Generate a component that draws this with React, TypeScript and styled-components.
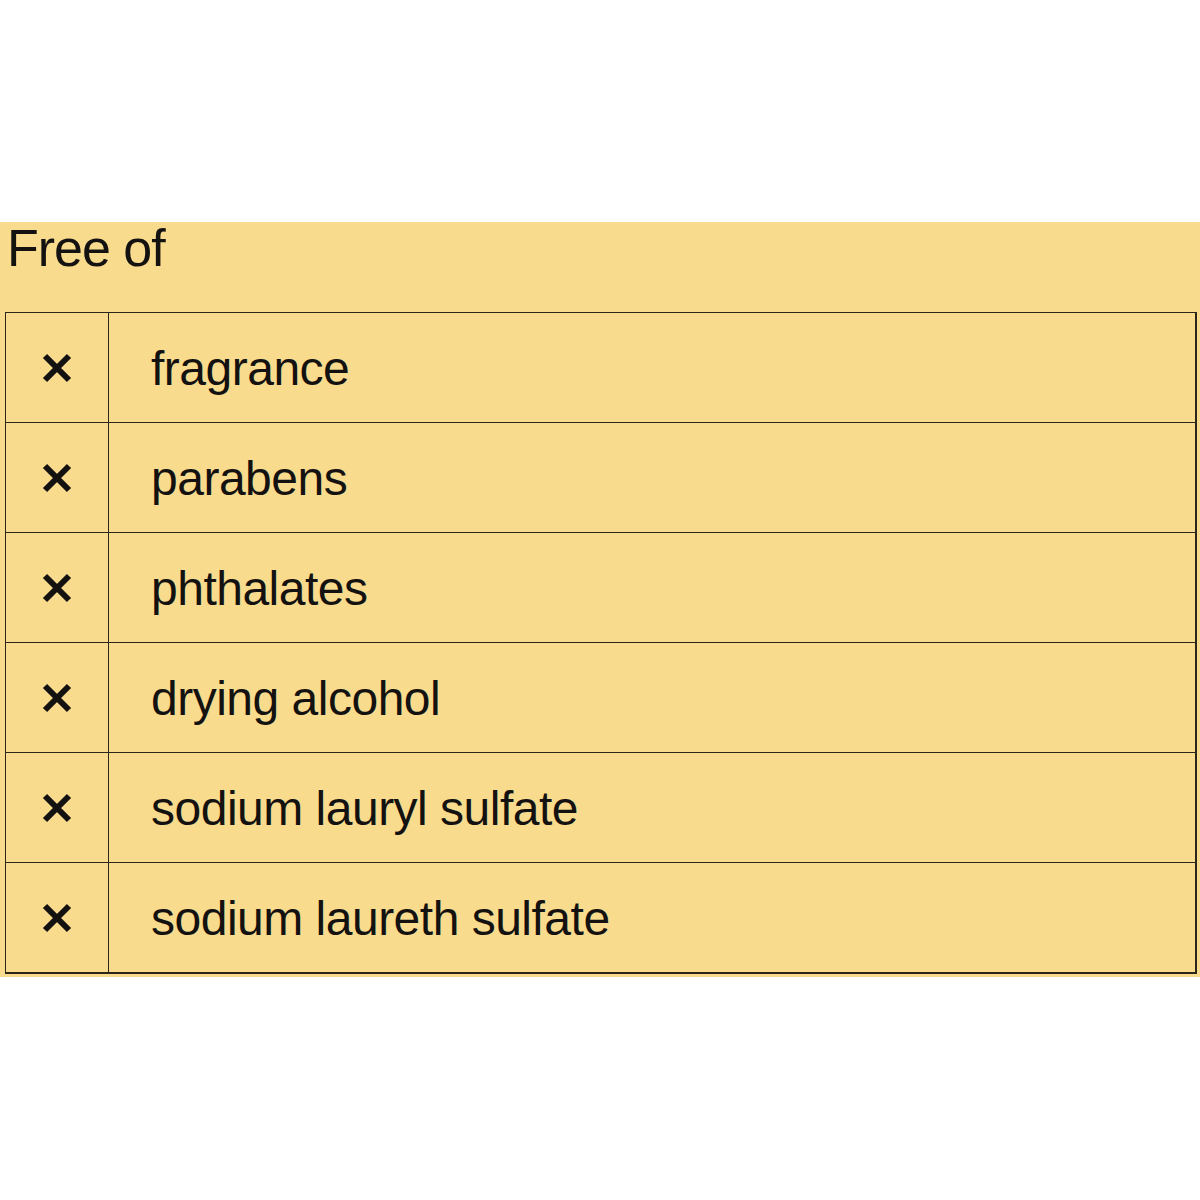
import React from 'react';
import styled, { createGlobalStyle } from 'styled-components';

const GlobalStyle = createGlobalStyle`
  body {
    margin: 0;
    background: #ffffff;
    font-family: 'Liberation Sans', Arial, sans-serif;
  }
`;

const Page = styled.div`
  width: 1200px;
  height: 1200px;
  padding-top: 222px;
  box-sizing: border-box;
`;

const Panel = styled.section`
  background: #f9db8e;
  padding: 0 3px 3px 5px;
  color: #141210;
`;

const Heading = styled.h2`
  margin: 0 0 0 2px;
  height: 90px;
  font-size: 52px;
  line-height: 52px;
  font-weight: 400;
  letter-spacing: -1px;
`;

const Table = styled.div`
  border: 1px solid #2b2619;
  border-right-width: 2px;
  border-bottom-width: 2px;
`;

const Row = styled.div`
  display: grid;
  grid-template-columns: 103px 1fr;
  height: 109px;
  & + & {
    border-top: 1px solid #2b2619;
  }
`;

const MarkCell = styled.div`
  display: flex;
  align-items: center;
  justify-content: center;
  border-right: 1px solid #2b2619;
`;

const LabelCell = styled.div`
  display: flex;
  align-items: center;
  padding-left: 42px;
  padding-top: 2px;
  font-size: 48px;
  letter-spacing: -0.5px;
`;

const Cross = () => (
  <svg width="32" height="32" viewBox="0 0 32 32">
    <path d="M4 4 L28 28 M28 4 L4 28" stroke="#141210" strokeWidth="6" fill="none" />
  </svg>
);

const items = [
  'fragrance',
  'parabens',
  'phthalates',
  'drying alcohol',
  'sodium lauryl sulfate',
  'sodium laureth sulfate',
];

export default function App() {
  return (
    <Page>
      <GlobalStyle />
      <Panel>
        <Heading>Free of</Heading>
        <Table>
          {items.map((item) => (
            <Row key={item}>
              <MarkCell>
                <Cross />
              </MarkCell>
              <LabelCell>{item}</LabelCell>
            </Row>
          ))}
        </Table>
      </Panel>
    </Page>
  );
}
